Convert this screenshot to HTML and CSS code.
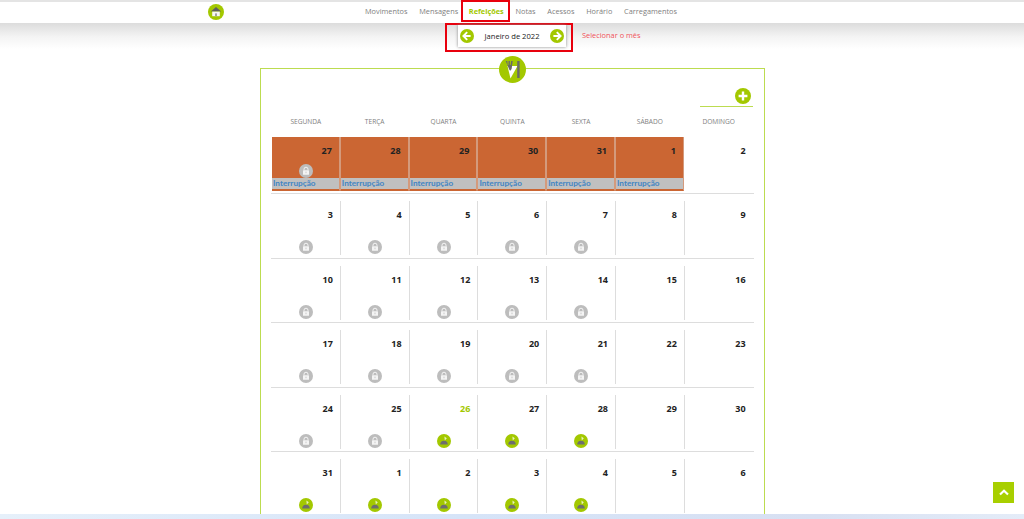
FILE: index.html
```html
<!DOCTYPE html>
<html lang="pt">
<head>
<meta charset="utf-8">
<title>Refeições</title>
<link rel="stylesheet" href="styles.css">
</head>
<body>
<svg class="defs" width="0" height="0" aria-hidden="true">
  <symbol id="lock" viewBox="0 0 14 14"><circle cx="7" cy="7" r="7" fill="#bdbdbd"/><path d="M5 6.4V5.2a2 2 0 0 1 4 0v1.2" fill="none" stroke="#f4f4f4" stroke-width="1"/><rect x="4" y="6.2" width="6" height="4.6" rx=".6" fill="#f4f4f4"/><rect x="6.6" y="7.6" width=".8" height="1.6" fill="#bdbdbd"/></symbol>
  <symbol id="meal" viewBox="0 0 14 14"><circle cx="7" cy="7" r="7" fill="#a3c800"/><path d="M3.2 10.6a3.8 3.8 0 0 1 7.6 0z" fill="#6e6e6e"/><path d="M7.4 2.4l2.4 1.8-2 2.2z" fill="#e9f2bd"/></symbol>
</svg>
<header class="nav">
  <a class="home" href="#"><svg width="16" height="16" viewBox="0 0 16 16"><circle cx="8" cy="8" r="8" fill="#a3c800"/><path d="M8 3 2.8 7.6h10.4z" fill="#5f5f5f"/><rect x="4.2" y="7.6" width="7.6" height="4.6" fill="#f6f6f6"/><rect x="7" y="9.4" width="2" height="2.8" fill="#a0a0a0"/></svg></a>
  <nav class="links">
    <a href="#">Movimentos</a>
    <a href="#">Mensagens</a>
    <a class="active" href="#">Refeições</a>
    <a href="#">Notas</a>
    <a href="#">Acessos</a>
    <a href="#">Horário</a>
    <a href="#">Carregamentos</a>
  </nav>
</header>
<section class="month-band">
  <div class="month-mark">
    <div class="month-card">
      <svg width="14" height="14" viewBox="0 0 14 14"><circle cx="7" cy="7" r="7" fill="#a3c800"/><path d="M7.2 3.2 3.4 7l3.8 3.8M3.8 7h6.8" fill="none" stroke="#fff" stroke-width="1.9"/></svg>
      <span>Janeiro de 2022</span>
      <svg width="14" height="14" viewBox="0 0 14 14"><circle cx="7" cy="7" r="7" fill="#a3c800"/><path d="M6.8 3.2 10.6 7l-3.8 3.8M10.2 7H3.4" fill="none" stroke="#fff" stroke-width="1.9"/></svg>
    </div>
  </div>
  <span class="month-note">Selecionar o mês</span>
</section>
<main class="calendar">
  <div class="badge"><svg width="27" height="27" viewBox="0 0 27 27"><circle cx="13.5" cy="13.5" r="13.5" fill="#a3c800"/><path d="M8.5 10h10l-7 12.5z" fill="#fff"/><path d="M6.7 5h1.6l.4 4h.8V5h1.4v4h.8l.4-4h1.6l-1 7.5-.9 2-1.2-.2-.8-1.8z" fill="#6a6a6a"/><path d="M19.4 5v17" stroke="#6a6a6a" stroke-width="2.4"/></svg></div>
  <div class="add-row"><svg width="16" height="16" viewBox="0 0 16 16"><circle cx="8" cy="8" r="8" fill="#a3c800"/><path d="M8 3.6v8.8M3.6 8h8.8" stroke="#fff" stroke-width="2.4"/></svg></div>
  <div class="week-head">
    <span>SEGUNDA</span><span>TERÇA</span><span>QUARTA</span><span>QUINTA</span><span>SEXTA</span><span>SÁBADO</span><span>DOMINGO</span>
  </div>
  <div class="week first">
    <div class="day off"><b>27</b><svg class="ic"><use href="#lock"/></svg><em>Interrupção</em></div>
    <div class="day off"><b>28</b><em>Interrupção</em></div>
    <div class="day off"><b>29</b><em>Interrupção</em></div>
    <div class="day off"><b>30</b><em>Interrupção</em></div>
    <div class="day off"><b>31</b><em>Interrupção</em></div>
    <div class="day off"><b>1</b><em>Interrupção</em></div>
    <div class="day plain"><b>2</b></div>
  </div>
  <div class="week">
    <div class="day"><b>3</b><svg class="ic"><use href="#lock"/></svg></div>
    <div class="day"><b>4</b><svg class="ic"><use href="#lock"/></svg></div>
    <div class="day"><b>5</b><svg class="ic"><use href="#lock"/></svg></div>
    <div class="day"><b>6</b><svg class="ic"><use href="#lock"/></svg></div>
    <div class="day"><b>7</b><svg class="ic"><use href="#lock"/></svg></div>
    <div class="day"><b>8</b></div>
    <div class="day"><b>9</b></div>
  </div>
  <div class="week">
    <div class="day"><b>10</b><svg class="ic"><use href="#lock"/></svg></div>
    <div class="day"><b>11</b><svg class="ic"><use href="#lock"/></svg></div>
    <div class="day"><b>12</b><svg class="ic"><use href="#lock"/></svg></div>
    <div class="day"><b>13</b><svg class="ic"><use href="#lock"/></svg></div>
    <div class="day"><b>14</b><svg class="ic"><use href="#lock"/></svg></div>
    <div class="day"><b>15</b></div>
    <div class="day"><b>16</b></div>
  </div>
  <div class="week">
    <div class="day"><b>17</b><svg class="ic"><use href="#lock"/></svg></div>
    <div class="day"><b>18</b><svg class="ic"><use href="#lock"/></svg></div>
    <div class="day"><b>19</b><svg class="ic"><use href="#lock"/></svg></div>
    <div class="day"><b>20</b><svg class="ic"><use href="#lock"/></svg></div>
    <div class="day"><b>21</b><svg class="ic"><use href="#lock"/></svg></div>
    <div class="day"><b>22</b></div>
    <div class="day"><b>23</b></div>
  </div>
  <div class="week">
    <div class="day"><b>24</b><svg class="ic"><use href="#lock"/></svg></div>
    <div class="day"><b>25</b><svg class="ic"><use href="#lock"/></svg></div>
    <div class="day"><b class="today">26</b><svg class="ic"><use href="#meal"/></svg></div>
    <div class="day"><b>27</b><svg class="ic"><use href="#meal"/></svg></div>
    <div class="day"><b>28</b><svg class="ic"><use href="#meal"/></svg></div>
    <div class="day"><b>29</b></div>
    <div class="day"><b>30</b></div>
  </div>
  <div class="week">
    <div class="day"><b>31</b><svg class="ic"><use href="#meal"/></svg></div>
    <div class="day"><b>1</b><svg class="ic"><use href="#meal"/></svg></div>
    <div class="day"><b>2</b><svg class="ic"><use href="#meal"/></svg></div>
    <div class="day"><b>3</b><svg class="ic"><use href="#meal"/></svg></div>
    <div class="day"><b>4</b><svg class="ic"><use href="#meal"/></svg></div>
    <div class="day"><b>5</b></div>
    <div class="day"><b>6</b></div>
  </div>
</main>
<a class="to-top" href="#"><svg width="10" height="7" viewBox="0 0 10 7"><path d="M1 5.5 5 1.8 9 5.5" fill="none" stroke="#fff" stroke-width="2.2"/></svg></a>
<div class="bottom-strip"></div>
</body>
</html>
```
FILE: styles.css
```css
* { box-sizing: border-box; }
html, body { height: 519px; overflow: hidden; }
body { margin: 0; background: #fff; font-family: "Open Sans", Lato, sans-serif; color: #222; }
a { text-decoration: none; color: inherit; }
.defs { position: absolute; }

.nav { height: 23px; border-top: 2px solid #e4e4e4; padding-left: 208px; display: flex; align-items: center; background: #fff; }
.home { display: flex; width: 16px; height: 16px; margin-top: -1px; }
.links { display: flex; align-items: center; margin: -3px 0 0 141px; gap: 11.7px; font-size: 7.35px; color: #808080; }
.links a.active { color: #a3c800; font-weight: 700; outline: 2px solid #e8000d; padding: 4px 4px 4px 6px; margin: 0 -4px 0 -7px; }

.month-band { height: 45px; padding-left: 445px; display: flex; align-items: flex-start; background: linear-gradient(#dcdcdc 0, #f4f4f4 14px, #fff 26px); }
.month-mark { width: 128px; height: 29px; border: 2px solid #e8000d; padding: 0 5px 0 11px; }
.month-card { width: 108px; height: 22px; background: #fff; box-shadow: 0 0 3px #888; display: flex; align-items: center; justify-content: space-between; padding: 0 2px; font-size: 7.6px; color: #222; }
.month-card span { margin-top: -1px; }
.month-note { margin: 7px 0 0 9px; font-size: 7.4px; color: #f0525a; }

.calendar { position: relative; margin-left: 260px; width: 505px; height: 520px; border: 1px solid #bcdc50; padding: 0 10px; }
.badge { position: absolute; left: 238px; top: -13px; width: 27px; height: 27px; }
.add-row { height: 38px; margin-left: 429px; width: 53px; border-bottom: 1px solid #bcdc50; padding: 18px 0 0 35px; }
.week-head { display: grid; grid-template-columns: repeat(7, 68.8px); height: 30px; padding: 10px 0 0 .5px; font-size: 6.6px; color: #808080; text-align: center; }
.week { display: grid; grid-template-columns: repeat(7, 68.8px); height: 64.5px; padding-top: 7px; border-bottom: 1px solid #ddd; }
.week.first { height: 57px; padding-top: 0; }
.day { position: relative; height: 54px; border-left: 1px solid #ddd; text-align: right; padding: 7px 7px 0 0; }
.day:first-child { border-left: 0; margin-left: 1px; }
.day b { display: block; font-size: 9px; line-height: 13px; color: #222; }
.day b.today { color: #a3c800; }
.day .ic { position: absolute; left: 27px; top: 39px; width: 14px; height: 14px; }
.day.off { background: #cb6633; border: 1px solid #d49a7c; border-width: 0 1px 1px 1px; border-bottom-color: #cb6633; }
.day.off:first-child { border-left: 0; }
.day.off .ic { top: 27px; }
.day.off em { position: absolute; left: 0; right: 0; top: 41px; height: 11px; background: #c0c0c0; text-align: left; padding-left: 1px; font-family: Lato, sans-serif; font-style: normal; font-size: 8.2px; line-height: 11px; font-weight: 700; color: #4285c4; }
.day.plain { border-left: 0; }

.to-top { position: fixed; left: 993px; top: 482px; width: 21px; height: 21px; background: #a8cf00; display: flex; align-items: center; justify-content: center; }
.bottom-strip { position: fixed; left: 0; right: 0; top: 514px; height: 5px; background: linear-gradient(90deg, #e6f0fa, #d6e4f8 45%, #d8e0f2 80%, #e4ecf8); }
```
